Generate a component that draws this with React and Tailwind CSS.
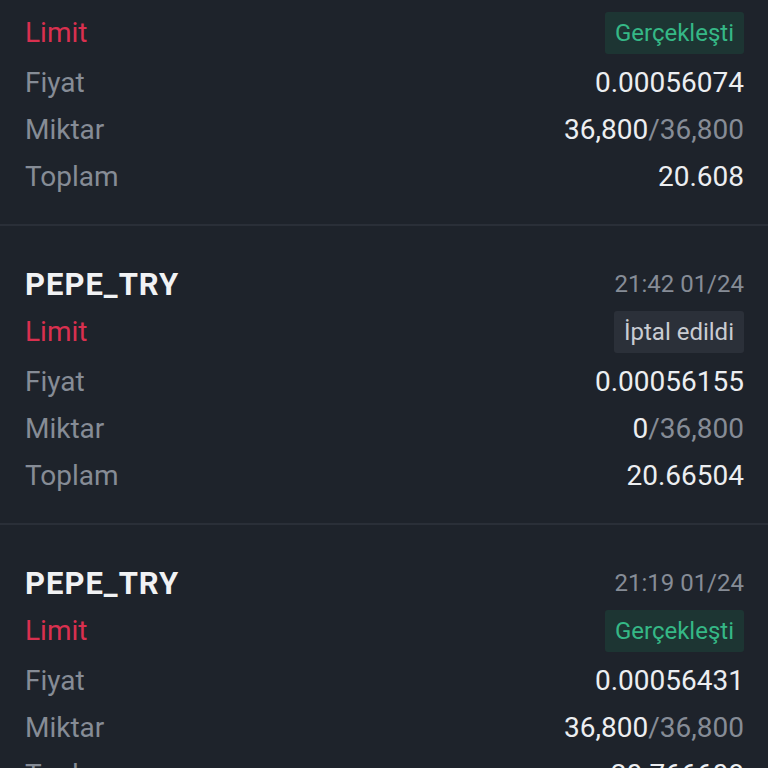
const orders = [
  { pair: 'PEPE_TRY', time: '21:58 01/24', status: 'done', price: '0.00056074', filled: '36,800', total: '20.608' },
  { pair: 'PEPE_TRY', time: '21:42 01/24', status: 'cancel', price: '0.00056155', filled: '0', total: '20.66504' },
  { pair: 'PEPE_TRY', time: '21:19 01/24', status: 'done', price: '0.00056431', filled: '36,800', total: '20.766608' },
];

function Badge({ status }) {
  if (status === 'done') {
    return (
      <span className="h-[42px] px-[10px] flex items-center rounded-[3px] bg-[#1d3533] text-[#35b886] text-[24px]">
        Gerçekleşti
      </span>
    );
  }
  return (
    <span className="h-[42px] px-[10px] flex items-center rounded-[3px] bg-[#2b3039] text-[#c9ccd2] text-[24px]">
      İptal edildi
    </span>
  );
}

function Row({ label, children }) {
  return (
    <div className="h-[47px] flex items-center justify-between">
      <span className="text-[#868c96]">{label}</span>
      <span className="text-[#eceef1]">{children}</span>
    </div>
  );
}

function OrderCard({ order }) {
  return (
    <div className="pl-[25px] pr-[24px] pt-[36px] pb-[24px] border-b-2 border-[#2a2f38]">
      <div className="h-[44px] flex items-center justify-between">
        <span className="text-[31px] font-bold text-[#f1f2f4] tracking-[1px]">{order.pair}</span>
        <span className="text-[24px] text-[#868c96]">{order.time}</span>
      </div>
      <div className="h-[52px] flex items-center justify-between">
        <span className="text-[#d9304f]">Limit</span>
        <Badge status={order.status} />
      </div>
      <Row label="Fiyat">{order.price}</Row>
      <Row label="Miktar">
        {order.filled}
        <span className="text-[#868c96]">/36,800</span>
      </Row>
      <Row label="Toplam">{order.total}</Row>
    </div>
  );
}

export default function App() {
  return (
    <div
      className="w-[768px] h-[768px] overflow-hidden bg-[#1e232b] text-[28px] leading-none"
      style={{ fontFamily: 'Roboto, "Noto Sans", sans-serif' }}
    >
      <div className="-mt-[73px]">
        {orders.map((o, i) => (
          <OrderCard key={i} order={o} />
        ))}
      </div>
    </div>
  );
}
